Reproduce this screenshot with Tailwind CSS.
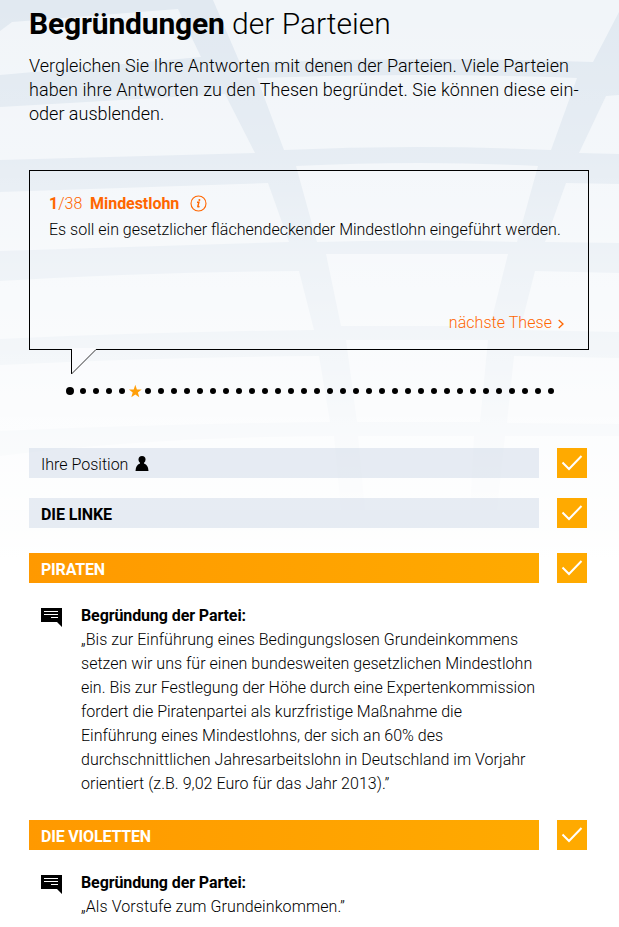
<!DOCTYPE html>
<html lang="de">
<head>
<meta charset="utf-8">
<title>Begründungen der Parteien</title>
<script src="https://cdn.jsdelivr.net/npm/@tailwindcss/browser@4"></script>
</head>
<body class="relative h-[927px] overflow-hidden bg-white font-[Roboto,sans-serif] font-light text-black">
<svg class="absolute inset-0 -z-10" width="619" height="927" viewBox="0 0 619 927" aria-hidden="true">
  <defs>
    <linearGradient id="fade" x1="0" y1="0" x2="0" y2="1"><stop offset="0" stop-color="#fff" stop-opacity="0"/><stop offset=".28" stop-color="#fff" stop-opacity=".2"/><stop offset=".46" stop-color="#fff" stop-opacity=".44"/><stop offset=".62" stop-color="#fff" stop-opacity=".6"/><stop offset=".77" stop-color="#fff" stop-opacity=".78"/><stop offset="1" stop-color="#fff"/></linearGradient>
  </defs>
  <rect width="619" height="560" fill="#e1e9f1"/>
  <g fill="#f1f5f9">
    <path d="M213 0H619V12L593 62Q415 56 240 63Z"/>
    <path d="M0 31L12 22L178 9L201 57L0 75Z"/>
    <path d="M0 107L225 94L255 153L0 160Z"/>
    <path d="M257 78Q415 72 577 78L551 150Q415 144 284 150Z"/>
    <path d="M606 96L619 95V154L579 153Z"/>
    <path d="M296 166Q420 160 538 166L517 242Q415 239 317 242Z"/>
    <path d="M0 192L268 183L289 242L0 251Z"/>
    <path d="M566 183L619 184V243L545 242Z"/>
    <path d="M326 254H508L490 326H341Z"/>
    <path d="M0 281Q150 272 299 271L314 330Q150 332 0 339Z"/>
    <path d="M535 271L619 273V332L520 330Z"/>
    <path d="M346 340H488L480 422H357Z"/>
    <path d="M0 365Q160 357 319 356L330 422Q160 424 0 431Z"/>
    <path d="M514 356L619 358V424L507 423Z"/>
    <path d="M358 436H474L470 510H365Z"/>
    <path d="M0 456Q150 437 334 436L341 510H0Z"/>
    <path d="M505 436H619V510H497Z"/>
  </g>
  <rect width="619" height="560" fill="url(#fade)"/>
</svg>
<main class="ml-[29px] w-[560px]">
  <h1 class="h-[53px] pt-[4px] text-[30px] leading-10 whitespace-nowrap"><b class="font-bold tracking-[-0.17px]">Begründungen</b> der Parteien</h1>
  <p class="relative top-px text-lg leading-6 whitespace-nowrap">Vergleichen Sie Ihre Antworten mit denen der Parteien. Viele Parteien<br><span class="tracking-[0.05px]">haben ihre Antworten zu den Thesen begründet. Sie können diese ein-</span><br>oder ausblenden.</p>

  <section class="relative mt-[45px] flex h-[180px] flex-col border border-black px-[19px] pt-[21px]">
    <div class="flex h-6 items-center">
      <h2 class="text-base leading-6 whitespace-pre text-[#ff6600]"><b class="font-bold">1</b>/38  <b class="font-bold tracking-[-0.05px]">Mindestlohn</b></h2>
      <svg class="-mt-[2px] ml-[11px] shrink-0" width="17" height="17" viewBox="0 0 17 17" fill="none" stroke="#ff6600"><circle cx="8.5" cy="8.5" r="7.5" stroke-width="1.1"/><path d="M7 7.2h1.9L7.8 11.5q-.1.8 1.7-.2" stroke-width="1.4"/><circle cx="9.4" cy="4.9" r="1" fill="#ff6600" stroke="none"/></svg>
    </div>
    <p class="mt-[2px] text-base leading-6 whitespace-nowrap">Es soll ein gesetzlicher flächendeckender Mindestlohn eingeführt werden.</p>
    <a class="mt-[69px] mr-[5px] flex items-center gap-[6px] self-end text-base leading-6 text-[#ff6600]"><span class="tracking-[0.05px]">nächste These</span><svg class="mt-[2px]" width="6" height="10" viewBox="0 0 6 10" fill="none" stroke="#ff6600" stroke-width="1.3"><path d="M.7 1L5 5L.7 9"/></svg></a>
    <svg class="absolute top-[177px] left-[41px]" width="27" height="28" viewBox="0 0 27 28"><path d="M1 0H25V2L1 26Z" fill="#fafbfd"/><path d="M.5 1V26" stroke="#000"/><path d="M.5 26L25 1.5" stroke="#333" fill="none"/></svg>
  </section>

  <nav id="dots" class="mt-[34px] ml-[34px] flex h-[14px] items-center"></nav>

  <div class="mt-[50px] flex justify-between pr-[2px]">
    <div class="flex h-[30px] w-[510px] items-center bg-[#cfd9e8]/50 pt-[3px] pl-[12px] text-base">Ihre Position<svg class="-mt-[2px] ml-[7px]" width="14" height="15" viewBox="0 0 14 15"><circle cx="7" cy="3.5" r="3.5"/><path d="M5 6H9V7.5Q13.4 9 13.5 15H.5Q.6 9 5 7.5Z"/></svg></div>
    <div class="size-[30px] bg-[#ffaa00]"><svg width="30" height="30" viewBox="0 0 30 30" fill="none" stroke="#fff" stroke-width="2"><path d="M5.5 14.5L12 21L24.5 8"/></svg></div>
  </div>
  <div class="mt-[20px] flex justify-between pr-[2px]">
    <div class="flex h-[30px] w-[510px] items-center bg-[#cfd9e8]/50 pt-[3px] pl-[12px] text-base font-bold tracking-[-0.1px]">DIE LINKE</div>
    <div class="size-[30px] bg-[#ffaa00]"><svg width="30" height="30" viewBox="0 0 30 30" fill="none" stroke="#fff" stroke-width="2"><path d="M5.5 14.5L12 21L24.5 8"/></svg></div>
  </div>
  <div class="mt-[25px] flex justify-between pr-[2px]">
    <div class="flex h-[30px] w-[510px] items-center bg-linear-to-r from-[#ff9900] to-[#ffaa00] pt-[3px] pl-[12px] text-base font-bold tracking-[-0.2px] text-white">PIRATEN</div>
    <div class="size-[30px] bg-[#ffaa00]"><svg width="30" height="30" viewBox="0 0 30 30" fill="none" stroke="#fff" stroke-width="2"><path d="M5.5 14.5L12 21L24.5 8"/></svg></div>
  </div>
  <div class="mt-[21px] flex pl-[12px]">
    <svg class="mt-[4px] mr-[19px] shrink-0" width="21" height="20" viewBox="0 0 21 20"><path d="M0 0H21V19L16 14H0Z"/><path d="M3 3.5H17M3 6.5H17M10 9.5H17" stroke="#fff"/></svg>
    <p class="text-base leading-6 whitespace-nowrap"><b class="font-bold tracking-[-0.1px]">Begründung der Partei:</b><br><span class="tracking-[0.03px]">„Bis zur Einführung eines Bedingungslosen Grundeinkommens</span><br><span class="tracking-[0.02px]">setzen wir uns für einen bundesweiten gesetzlichen Mindestlohn</span><br>ein. Bis zur Festlegung der Höhe durch eine Expertenkommission<br>fordert die Piratenpartei als kurzfristige Maßnahme die<br>Einführung eines Mindestlohns, der sich an 60% des<br><span class="tracking-[0.03px]">durchschnittlichen Jahresarbeitslohn in Deutschland im Vorjahr</span><br><span class="tracking-[0.03px]">orientiert (z.B. 9,02 Euro für das Jahr 2013).”</span></p>
  </div>
  <div class="mt-[24px] flex justify-between pr-[2px]">
    <div class="flex h-[30px] w-[510px] items-center bg-linear-to-r from-[#ff9900] to-[#ffaa00] pt-[3px] pl-[12px] text-base font-bold tracking-[-0.18px] text-white">DIE VIOLETTEN</div>
    <div class="size-[30px] bg-[#ffaa00]"><svg width="30" height="30" viewBox="0 0 30 30" fill="none" stroke="#fff" stroke-width="2"><path d="M5.5 14.5L12 21L24.5 8"/></svg></div>
  </div>
  <div class="mt-[21px] flex pl-[12px]">
    <svg class="mt-[4px] mr-[19px] shrink-0" width="21" height="20" viewBox="0 0 21 20"><path d="M0 0H21V19L16 14H0Z"/><path d="M3 3.5H17M3 6.5H17M10 9.5H17" stroke="#fff"/></svg>
    <p class="text-base leading-6 whitespace-nowrap"><b class="font-bold tracking-[-0.1px]">Begründung der Partei:</b><br><span class="tracking-[0.08px]">„Als Vorstufe zum Grundeinkommen.”</span></p>
  </div>
</main>
<script>
  const star = '<svg class="shrink-0 overflow-visible" width="13" height="13" viewBox="0 0 13 13"><path fill="#ff9f0a" d="M7.3 -.2L8.9 4.5H13.7L9.9 7.5L11.3 12.3L7.3 9.5L3.3 12.3L4.7 7.5L.9 4.5H5.7Z"/></svg>';
  const dot = r => `<svg class="shrink-0" width="13" height="13" viewBox="0 0 13 13"><circle cx="7" cy="6" r="${r}"/></svg>`;
  document.getElementById('dots').innerHTML = Array.from({length: 38}, (_, i) => i === 5 ? star : dot(i ? 3 : 4)).join('');
</script>
</body>
</html>
